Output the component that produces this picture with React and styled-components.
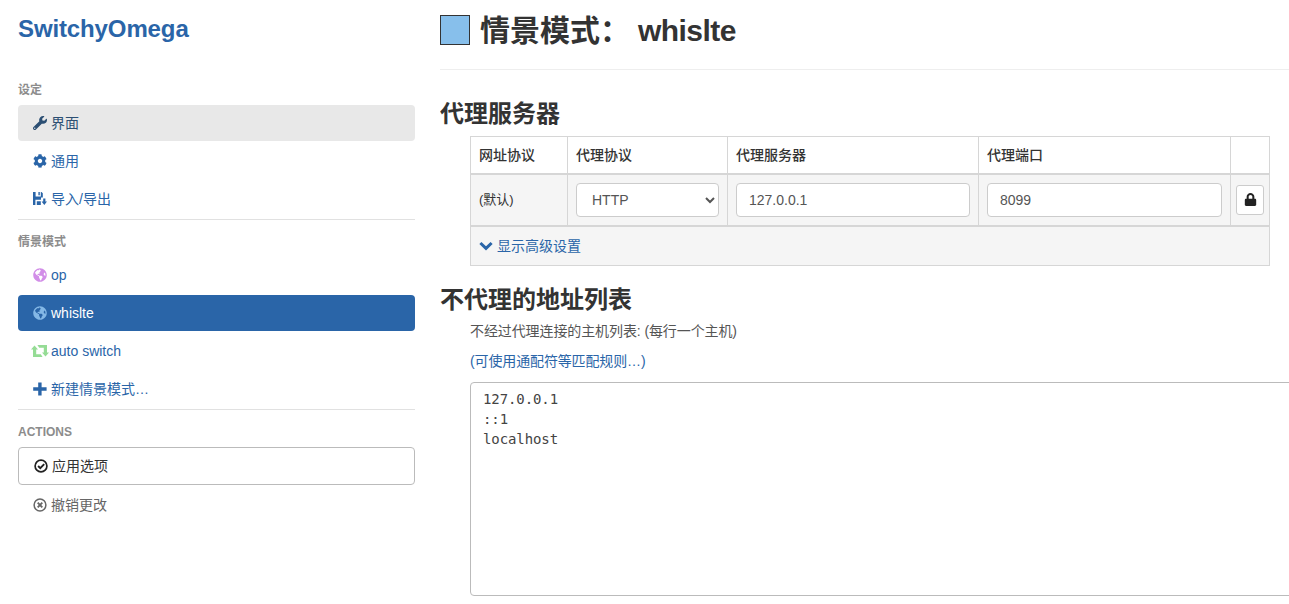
import React from 'react';
import styled, { createGlobalStyle } from 'styled-components';
import { FaWrench, FaCog, FaGlobeAmericas, FaLock } from 'react-icons/fa';

const Global = createGlobalStyle`
  html, body { margin: 0; padding: 0; background: #fff; overflow: hidden; height: 604px; }
  body {
    font-family: "Liberation Sans", "Noto Sans CJK SC", sans-serif;
    font-size: 14px;
    line-height: 20px;
    color: #333;
  }
  * { box-sizing: border-box; }
`;

const Page = styled.div`
  display: grid;
  grid-template-columns: 397px minmax(0, 1fr);
  column-gap: 25px;
  padding-left: 18px;
  height: 604px;
  overflow: hidden;
`;

const Sidebar = styled.aside`
  display: flex;
  flex-direction: column;
  padding-top: 15px;
`;

const Logo = styled.h1`
  margin: 0 0 39px;
  font-size: 24px;
  line-height: 28px;
  font-weight: 700;
  color: #2a65a8;
  letter-spacing: -0.12px;
`;

const NavLabel = styled.div`
  font-size: 12px;
  line-height: 17px;
  font-weight: 700;
  color: #8c8c8c;
  margin-bottom: 6px;
`;

const NavItem = styled.a`
  display: flex;
  align-items: center;
  height: ${p => (p.$bordered ? '38px' : '36px')};
  margin-bottom: 2px;
  padding-left: 15px;
  border-radius: 4px;
  border: ${p => (p.$bordered ? '1px solid #bbb' : 'none')};
  color: ${p => p.$color || '#2a65a8'};
  background: ${p => p.$bg || 'transparent'};
`;

const Slot = styled.span`
  display: inline-flex;
  align-items: center;
  width: 18px;
  height: 14px;
  flex: none;
  color: ${p => p.$color || 'inherit'};
  svg { display: block; overflow: visible; }
`;

const Divider = styled.hr`
  width: 100%;
  height: 1px;
  border: 0;
  margin: 0 0 14px;
  background: #e1e1e1;
`;

const Main = styled.main`
  min-width: 0;
  overflow: hidden;
  padding-top: 15px;
`;

const TitleRow = styled.header`
  display: flex;
  align-items: center;
  height: 30px;
`;

const Swatch = styled.span`
  width: 30px;
  height: 30px;
  flex: none;
  background: #87bfeb;
  border: 1px solid #333;
  margin-right: 10px;
`;

const Title = styled.h2`
  margin: 0;
  font-size: 30px;
  line-height: 33px;
  font-weight: 700;
  color: #333;
  white-space: pre;
`;

const TitleName = styled.span`
  margin-left: 8px;
  letter-spacing: -0.55px;
`;

const Rule = styled.hr`
  height: 1px;
  border: 0;
  margin: 24px 0 31px;
  background: #eee;
`;

const SectionTitle = styled.h3`
  margin: 0;
  font-size: 24px;
  line-height: 26px;
  font-weight: 700;
  color: #333;
`;

const Indented = styled.div`
  margin-left: 30px;
`;

const Table = styled.table`
  width: 799px;
  table-layout: fixed;
  border-collapse: collapse;
  margin-top: 9px;
  border: 1px solid #d6d6d6;
`;

const Th = styled.th`
  height: 37px;
  padding: 0 8px;
  text-align: left;
  font-size: 14px;
  font-weight: 500;
  color: #333;
  border: 1px solid #d6d6d6;
  border-bottom: 2px solid #d6d6d6;
`;

const Td = styled.td`
  height: 52px;
  padding: 0 8px;
  font-size: 13px;
  background: #f5f5f5;
  border: 1px solid #d6d6d6;
  border-bottom: 2px solid #d6d6d6;
  vertical-align: middle;
`;

const FooterCell = styled.td`
  height: 40px;
  padding: 0 8px;
  background: #f5f5f5;
  border: 1px solid #d6d6d6;
`;

const LockCell = styled(Td)`
  padding: 0 5px;
`;

const Select = styled.select`
  display: block;
  width: 143px;
  height: 34px;
  padding: 0 11px;
  font: 14px/20px "Liberation Sans", sans-serif;
  color: #555;
  background: #fff;
  border: 1px solid #ccc;
  border-radius: 4px;
`;

const Input = styled.input`
  display: block;
  width: 100%;
  height: 34px;
  padding: 0 12px;
  font: 14px/20px "Liberation Sans", sans-serif;
  color: #555;
  background: #fff;
  border: 1px solid #ccc;
  border-radius: 4px;
`;

const LockButton = styled.button`
  display: flex;
  align-items: center;
  justify-content: center;
  width: 28px;
  height: 30px;
  padding: 0;
  color: #222;
  background: #fff;
  border: 1px solid #ccc;
  border-radius: 3px;
`;

const AdvancedLink = styled.a`
  display: flex;
  align-items: center;
  gap: 4px;
  color: #2a65a8;
  font-size: 14px;
  svg { display: block; }
`;

const BypassTitle = styled(SectionTitle)`
  margin-top: 21px;
`;

const Help = styled.p`
  margin: 8px 0 10px;
  font-size: 14px;
  line-height: 20px;
  letter-spacing: -0.1px;
  color: #555;
  white-space: nowrap;
`;

const Wildcard = styled.a`
  display: block;
  font-size: 14px;
  line-height: 20px;
  letter-spacing: -0.13px;
  color: #2a65a8;
  margin-bottom: 11px;
`;

const Rules = styled.textarea`
  display: block;
  width: 900px;
  height: 214px;
  padding: 6px 12px;
  font: 14px/20px "DejaVu Sans Mono", monospace;
  letter-spacing: -0.1px;
  color: #444;
  background: #fff;
  border: 1px solid #bbb;
  border-radius: 4px;
  resize: none;
  outline: none;
`;

const FloppySave = () => (
  <svg width="14" height="14" viewBox="0 0 14 14" fill="currentColor">
    <path d="M0 0h2.6v4.6h5.2V0h.7l1.3 1.3V5.6H8v2.2H2.4V13H0z" />
    <path d="M3.8 9.2h4V13h-4zM5.4 0h1.4v3.2H5.4z" />
    <path d="M10.2 6.4h2.2v3.2H14L11.3 13 8.6 9.6h1.6z" />
  </svg>
);

const OkCircle = () => (
  <svg width="14" height="14" viewBox="0 0 14 14" fill="none" stroke="currentColor">
    <circle cx="7" cy="7" r="5.9" strokeWidth="1.7" />
    <path d="M4.1 7l2.2 2.2 3.9-4" strokeWidth="1.9" />
  </svg>
);

const RemoveCircle = () => (
  <svg width="14" height="14" viewBox="0 0 14 14" fill="none" stroke="currentColor">
    <circle cx="7" cy="7" r="5.9" strokeWidth="1.5" />
    <path d="M4.7 4.7l4.6 4.6M9.3 4.7l-4.6 4.6" strokeWidth="1.9" />
  </svg>
);

const Retweet = () => (
  <svg width="18" height="14" viewBox="0 0 18 14" fill="currentColor" style={{ marginLeft: -2 }}>
    <path d="M0 5.5L3.5 1.5 7 5.5H5.2v4.8h4.6L11.6 13H2V5.5z" />
    <path d="M18 8.5L14.5 12.5 11 8.5h1.8V3.7H8.2L6.4 1H16v7.5z" />
  </svg>
);

const Plus = () => (
  <svg width="14" height="14" viewBox="0 0 14 14" fill="currentColor">
    <path d="M5.2 0.5h3.4v4.8h5v3.4h-5v4.8H5.2V8.7H0.2V5.3h5z" />
  </svg>
);

const Chevron = () => (
  <svg width="14" height="10" viewBox="0 0 14 10" fill="none" stroke="currentColor">
    <path d="M1.4 2L7 7.4 12.6 2" strokeWidth="3" />
  </svg>
);

export default function App() {
  return (
    <>
      <Global />
      <Page>
        <Sidebar>
          <Logo>SwitchyOmega</Logo>
          <NavLabel>设定</NavLabel>
          <NavItem $bg="#e8e8e8" $color="#2c4f73">
            <Slot><FaWrench size={14} /></Slot>界面
          </NavItem>
          <NavItem>
            <Slot><FaCog size={14} /></Slot>通用
          </NavItem>
          <NavItem>
            <Slot><FloppySave /></Slot>导入/导出
          </NavItem>
          <Divider />
          <NavLabel>情景模式</NavLabel>
          <NavItem>
            <Slot $color="#d28ee8"><FaGlobeAmericas size={14} /></Slot>op
          </NavItem>
          <NavItem $bg="#2a65a8" $color="#fff">
            <Slot $color="#84b8e6"><FaGlobeAmericas size={14} /></Slot>whislte
          </NavItem>
          <NavItem>
            <Slot $color="#95dc95"><Retweet /></Slot>auto switch
          </NavItem>
          <NavItem>
            <Slot><Plus /></Slot>新建情景模式…
          </NavItem>
          <Divider />
          <NavLabel>ACTIONS</NavLabel>
          <NavItem $bordered $color="#333">
            <Slot $color="#222"><OkCircle /></Slot>应用选项
          </NavItem>
          <NavItem $color="#666">
            <Slot><RemoveCircle /></Slot>撤销更改
          </NavItem>
        </Sidebar>
        <Main>
          <TitleRow>
            <Swatch />
            <Title>情景模式：<TitleName>whislte</TitleName></Title>
          </TitleRow>
          <Rule />
          <SectionTitle>代理服务器</SectionTitle>
          <Indented>
            <Table>
              <colgroup>
                <col style={{ width: 97 }} />
                <col style={{ width: 160 }} />
                <col style={{ width: 251 }} />
                <col style={{ width: 252 }} />
                <col style={{ width: 39 }} />
              </colgroup>
              <thead>
                <tr>
                  <Th>网址协议</Th>
                  <Th>代理协议</Th>
                  <Th>代理服务器</Th>
                  <Th>代理端口</Th>
                  <Th />
                </tr>
              </thead>
              <tbody>
                <tr>
                  <Td>(默认)</Td>
                  <Td>
                    <Select defaultValue="HTTP">
                      <option>HTTP</option>
                    </Select>
                  </Td>
                  <Td><Input defaultValue="127.0.0.1" /></Td>
                  <Td><Input defaultValue="8099" /></Td>
                  <LockCell>
                    <LockButton><FaLock size={13} /></LockButton>
                  </LockCell>
                </tr>
                <tr>
                  <FooterCell colSpan={5}>
                    <AdvancedLink>
                      <Chevron />显示高级设置
                    </AdvancedLink>
                  </FooterCell>
                </tr>
              </tbody>
            </Table>
          </Indented>
          <BypassTitle>不代理的地址列表</BypassTitle>
          <Indented>
            <Help>不经过代理连接的主机列表: (每行一个主机)</Help>
            <Wildcard>(可使用通配符等匹配规则…)</Wildcard>
            <Rules defaultValue={'127.0.0.1\n::1\nlocalhost'} />
          </Indented>
        </Main>
      </Page>
    </>
  );
}
